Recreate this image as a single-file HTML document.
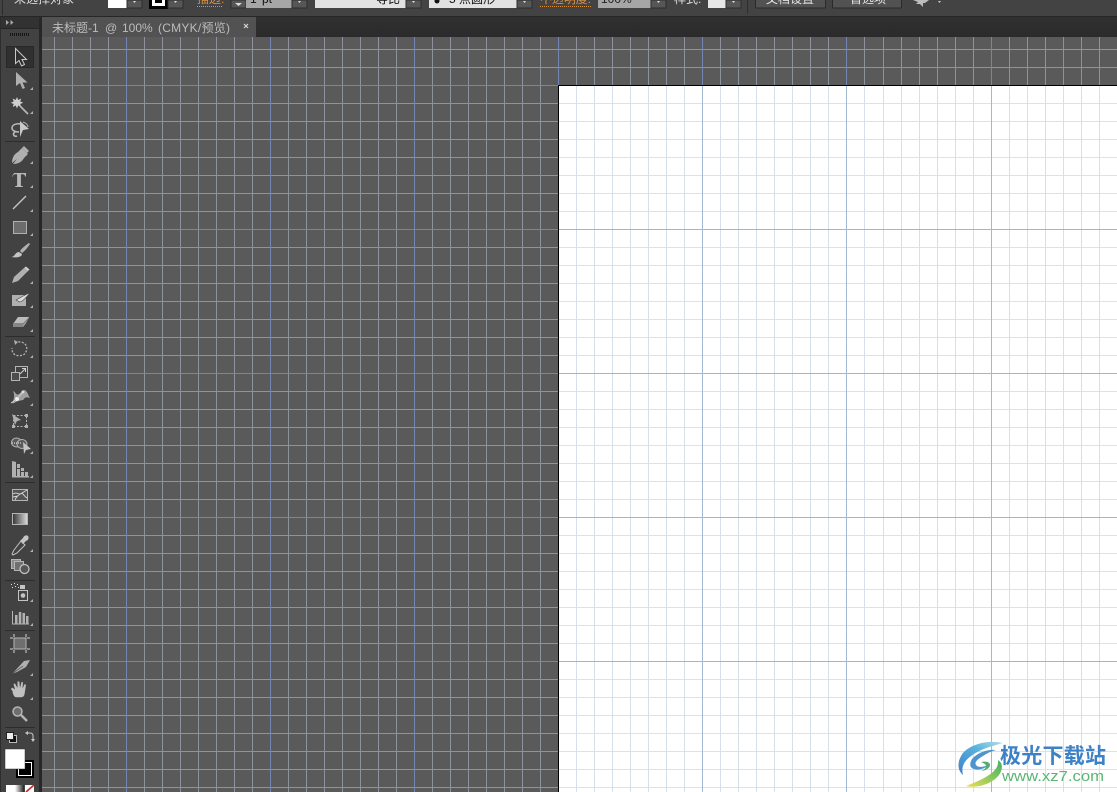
<!DOCTYPE html>
<html lang="zh-CN">
<head>
<meta charset="utf-8">
<title>未标题-1</title>
<style>
html,body{margin:0;padding:0;background:#5a5a5a;width:1117px;height:792px;overflow:hidden}
svg{display:block}
body>svg{position:absolute;left:0;top:0}
text{font-family:"Liberation Sans","Noto Sans CJK SC",sans-serif}
.soft{filter:blur(.35px)}
.g{fill:none;stroke-width:1;shape-rendering:crispEdges}
</style>
</head>
<body>
<svg width="1117" height="792" viewBox="0 0 1117 792" xmlns="http://www.w3.org/2000/svg">
<defs>
<path id="mv" d="M54.500 0V792M72.500 0V792M90.500 0V792M108.500 0V792M144.500 0V792M162.500 0V792M180.500 0V792M198.500 0V792M216.500 0V792M234.500 0V792M252.500 0V792M288.500 0V792M306.500 0V792M324.500 0V792M342.500 0V792M360.500 0V792M378.500 0V792M396.500 0V792M432.500 0V792M450.500 0V792M468.500 0V792M486.500 0V792M504.500 0V792M522.500 0V792M540.500 0V792M576.500 0V792M594.500 0V792M612.500 0V792M630.500 0V792M648.500 0V792M666.500 0V792M684.500 0V792M720.500 0V792M738.500 0V792M756.500 0V792M774.500 0V792M792.500 0V792M810.500 0V792M828.500 0V792M864.500 0V792M883.500 0V792M901.500 0V792M919.500 0V792M937.500 0V792M955.500 0V792M973.500 0V792M1009.500 0V792M1027.500 0V792M1045.500 0V792M1063.500 0V792M1081.500 0V792M1099.500 0V792"/>
<path id="mh" d="M0 49.500H1117M0 67.500H1117M0 103.500H1117M0 121.500H1117M0 139.500H1117M0 157.500H1117M0 175.500H1117M0 193.500H1117M0 211.500H1117M0 247.500H1117M0 265.500H1117M0 283.500H1117M0 301.500H1117M0 319.500H1117M0 337.500H1117M0 355.500H1117M0 391.500H1117M0 409.500H1117M0 427.500H1117M0 445.500H1117M0 463.500H1117M0 481.500H1117M0 499.500H1117M0 535.500H1117M0 553.500H1117M0 571.500H1117M0 589.500H1117M0 607.500H1117M0 625.500H1117M0 643.500H1117M0 679.500H1117M0 697.500H1117M0 715.500H1117M0 733.500H1117M0 751.500H1117M0 769.500H1117M0 787.500H1117"/>
<path id="Mv" d="M126.500 0V792M270.500 0V792M414.500 0V792M558.500 0V792M702.500 0V792M846.500 0V792M991.500 0V792"/>
<path id="Mh" d="M0 85.500H1117M0 229.500H1117M0 373.500H1117M0 517.500H1117M0 661.500H1117"/>
<linearGradient id="gr" x1="0" x2="1" y1="0" y2="0"><stop offset="0" stop-color="#333"/><stop offset="1" stop-color="#ddd"/></linearGradient>
<linearGradient id="gr2" x1="0" x2="1" y1="0" y2="0"><stop offset="0" stop-color="#fff"/><stop offset="1" stop-color="#222"/></linearGradient>
<linearGradient id="tb" x1="0" x2="0" y1="0" y2="1"><stop offset="0" stop-color="#303030"/><stop offset="1" stop-color="#2b2b2b"/></linearGradient>
<linearGradient id="sw1" x1="0" x2="1" y1="1" y2="0"><stop offset="0" stop-color="#3f7fc8"/><stop offset=".6" stop-color="#58b3dc"/><stop offset="1" stop-color="#b5dde8"/></linearGradient>
<linearGradient id="sw2" x1="0" x2="1" y1="1" y2="0"><stop offset="0" stop-color="#f0dc58"/><stop offset=".55" stop-color="#86c85c"/><stop offset="1" stop-color="#3fae6a"/></linearGradient>
</defs>

<!-- canvas -->
<rect x="41" y="37" width="1076" height="755" fill="#5a5a5a"/>
<svg x="41" y="37" width="1076" height="755" viewBox="41 37 1076 755">
<g class="soft">
<use href="#mh" class="g" stroke="#8f93a0"/>
<use href="#mv" class="g" stroke="#8d929c"/>
<use href="#Mh" class="g" stroke="#7385b0"/>
<use href="#Mv" class="g" stroke="#7385b0"/>
</g>
</svg>

<!-- artboard -->
<rect x="558" y="85" width="559" height="707" fill="#fff"/>
<svg x="558" y="85" width="559" height="707" viewBox="558 85 559 707">
<g class="soft">
<use href="#mh" class="g" stroke="#dbe2ea"/>
<use href="#mv" class="g" stroke="#d6e0ea"/>
<use href="#Mh" class="g" stroke="#a6b4c4"/>
<use href="#Mv" class="g" stroke="#a3b7d0"/>
</g>
</svg>
<rect x="558" y="85" width="559" height="1" fill="#000"/>
<rect x="558" y="85" width="1" height="707" fill="#000"/>

<!-- tab bar -->
<rect x="0" y="17" width="1117" height="20" fill="url(#tb)"/>
<rect x="42" y="17" width="214" height="20" fill="#525252"/>
<rect x="41" y="17" width="1" height="20" fill="#2a2a2a"/>
<g font-size="12" fill="#bcbcbc" class="soft">
<text x="52" y="32">未标题-1</text>
<text x="105" y="32">@</text>
<text x="122" y="32">100%</text>
<text x="158" y="32" textLength="72" lengthAdjust="spacing">(CMYK/预览)</text>
</g>
<path d="M244 24l4 4M248 24l-4 4" stroke="#d4d4d4" stroke-width="1.200" fill="none"/>

<!-- top control bar -->
<rect x="0" y="0" width="1117" height="16" fill="#434343"/>
<rect x="0" y="16" width="1117" height="1" fill="#262626"/>
<rect x="2" y="0" width="1" height="15" fill="#2c2c2c"/>
<text x="14" y="3" font-size="12" fill="#dcdcdc">未选择对象</text>
<rect x="108" y="0" width="19" height="8" fill="#fff"/>
<rect x="127" y="0" width="15" height="8" fill="#565656" stroke="#2e2e2e"/>
<path d="M133 1h3l-1.500 2z" fill="#ddd"/>
<rect x="149" y="0" width="19" height="9" fill="#000"/>
<rect x="152" y="0" width="13" height="6" fill="#fff"/>
<rect x="155" y="0" width="7" height="3" fill="#000"/>
<rect x="168" y="0" width="15" height="8" fill="#565656" stroke="#2e2e2e"/>
<path d="M174 1h3l-1.500 2z" fill="#ddd"/>
<text x="197" y="3" font-size="12" fill="#d98f3f">描边:</text>
<path d="M197 6.500h26" stroke="#d98f3f" stroke-dasharray="1 1"/>
<rect x="231" y="0" width="15" height="8" fill="#565656" stroke="#2e2e2e"/>
<path d="M235 3h7l-3.500 3z" fill="#ddd"/>
<rect x="246" y="0" width="46" height="8" fill="#a6a6a6"/>
<text x="250" y="3" font-size="12" fill="#111">1</text><text x="262" y="3" font-size="12" fill="#111">pt</text>
<rect x="292" y="0" width="15" height="8" fill="#565656" stroke="#2e2e2e"/>
<path d="M298 1h3l-1.500 2z" fill="#ddd"/>
<rect x="315" y="0" width="91" height="8" fill="#e2e2e2"/>
<text x="376" y="3" font-size="12" fill="#111">等比</text>
<rect x="406" y="0" width="15" height="8" fill="#565656" stroke="#2e2e2e"/>
<path d="M412 1h3l-1.500 2z" fill="#ddd"/>
<rect x="429" y="0" width="88" height="8" fill="#e2e2e2"/>
<circle cx="437" cy="1" r="2.500" fill="#111"/>
<text x="449" y="3" font-size="12" fill="#111">5 点圆形</text>
<rect x="517" y="0" width="15" height="8" fill="#565656" stroke="#2e2e2e"/>
<path d="M523 1h3l-1.500 2z" fill="#ddd"/>
<text x="540" y="3" font-size="12" fill="#d98f3f" textLength="51">不透明度:</text>
<path d="M540 6.500h51" stroke="#d98f3f" stroke-dasharray="1 1"/>
<rect x="598" y="0" width="53" height="8" fill="#a6a6a6"/>
<text x="601" y="3" font-size="12" fill="#222">100%</text>
<rect x="651" y="0" width="15" height="8" fill="#565656" stroke="#2e2e2e"/>
<path d="M657 1h3l-1.500 2z" fill="#ddd"/>
<text x="674" y="3" font-size="12" fill="#dcdcdc">样式:</text>
<rect x="708" y="0" width="18" height="8" fill="#e6e6e6"/>
<rect x="726" y="0" width="15" height="8" fill="#565656" stroke="#2e2e2e"/>
<path d="M732 1h3l-1.500 2z" fill="#ddd"/>
<rect x="747" y="0" width="1" height="14" fill="#2e2e2e"/>
<rect x="755.500" y="-3" width="70" height="11" rx="1" fill="#525252" stroke="#2a2a2a"/>
<text x="766" y="3" font-size="12" fill="#e0e0e0">文档设置</text>
<rect x="832.500" y="-3" width="69" height="11" rx="1" fill="#525252" stroke="#2a2a2a"/>
<text x="850" y="3" font-size="12" fill="#e0e0e0">首选项</text>
<path d="M913 0h16l-4 3h-2l0 4-3-3-4 0 2-2z" fill="#bdbdbd"/>
<path d="M938 1h3l-1.500 2z" fill="#ccc"/>

<!-- left toolbar -->
<rect x="0" y="17" width="41" height="775" fill="#424242"/>
<rect x="0" y="17" width="1" height="775" fill="#2d2d2d"/>
<rect x="39" y="17" width="3" height="775" fill="#272727"/>
<rect x="1" y="17" width="38" height="11" fill="#323232"/>
<rect x="1" y="28" width="38" height="1" fill="#262626"/>
<path d="M6 20l3 2.500-3 2.500zM10.500 20l3 2.500-3 2.500z" fill="#aaa"/>
<path d="M10 34.500h19" stroke="#151515" stroke-width="3" stroke-dasharray="1 1"/>
<rect x="6.500" y="46.500" width="27" height="21" fill="#303030" stroke="#282828"/>

<g fill="#b0b0b0" stroke="none" class="soft">
<!-- selection -->
<path d="M15.500 48.500v15l3.500-3 2.500 5.500 3-1.500-2.500-5h4.500z" fill="none" stroke="#c8c8c8"/>
<!-- direct -->
<path d="M16 72v14l4-3 2.500 6 2.500-1-2.500-5.500h5z"/>
<!-- wand -->
<path d="M17 97l1.200 3 3-1.500-1 3 3 1.200-3 1.300 1 3-3-1.500-1.200 3-1.300-3-3 1.500 1-3-3-1.300 3-1.200-1-3 3 1.500z" fill="#d0d0d0"/>
<path d="M20 106l8 8" stroke="#b4b4b4" stroke-width="1.800"/>
<!-- lasso -->
<path d="M21 124c-5-1-9 1-9 4 0 2.500 3 4 7 4M15 132c-3 2-1 5 2 4" fill="none" stroke="#bcbcbc" stroke-width="1.500"/>
<path d="M20 121l9 8-6 1-3 7z" fill="#c8c8c8"/>
<path d="M23 122c3 1 5 3 5 5" fill="none" stroke="#b4b4b4"/>
<rect x="5" y="141" width="30" height="1" fill="#2c2c2c"/>
<!-- pen -->
<path d="M12 163c0-5 2-9 6-11l4-4 6 6-4 4c-2 4-6 6-11 6l4-5z"/>
<path d="M22 148l2-2 5 5-2 2z"/>
<!-- type -->
<path d="M14 173h12v3.500h-.8c-.3-1.500-1-2.300-2.500-2.300h-1.800v10.800c0 .8.500 1 2 1.200v.8h-7.800v-.8c1.500-.2 2-.4 2-1.200v-10.800h-1.800c-1.500 0-2.200.8-2.500 2.300h-.8z" fill="#b8b8b8"/>
<!-- line -->
<path d="M13 209l13-13" stroke="#c8c8c8" stroke-width="1.300"/>
<!-- rect -->
<rect x="13.500" y="221.500" width="13" height="12" fill="#6d6d6d" stroke="#b0b0b0"/>
<!-- brush -->
<path d="M29 243c-3 2-7 5-9 8l2 2c3-2 6-6 8-9z"/>
<path d="M11 257c4 0 4-5 8-5l3 2c0 3-5 4-11 3z" fill="#c4c4c4"/>
<!-- pencil -->
<path d="M24 268l4 3-10 10-6 2 2-6z"/>
<path d="M24 268l2-1.500 3.500 3-1.500 1.500z" fill="#d0d0d0"/>
<!-- blob -->
<path d="M12 295h12l-1 4 3-1v8H12z"/>
<path d="M16 300c4-2 8-5 14-7-3 3-6 8-10 9z" fill="#dcdcdc" stroke="#424242" stroke-width=".6"/>
<!-- eraser -->
<path d="M18 317h11l-3 6-3 4H13v-3z" fill="#bcbcbc"/>
<path d="M13 323h10l6-6v1l-5.500 7-.5 2H13z" fill="#868686"/>
<rect x="5" y="336" width="30" height="1" fill="#2c2c2c"/>
<!-- rotate -->
<path d="M15 343c4-2 8-1 10 1 3 3 2 9-2 11-3 1-7 1-9-1-2-2-2-4-2-6" fill="none" stroke="#b4b4b4" stroke-width="1.300" stroke-dasharray="2 1.500"/>
<path d="M14 340l4 2-3 3z"/>
<!-- scale -->
<rect x="15.500" y="366.500" width="12" height="11" fill="none" stroke="#b4b4b4"/>
<rect x="11.500" y="372.500" width="8" height="8" fill="#4c4c4c" stroke="#b4b4b4"/>
<path d="M20 374l5-5M22 368.500h3.500v3.500" fill="none" stroke="#d0d0d0"/>
<!-- warp -->
<path d="M13 391c3 1 3 5 6 3s2-4 5-4 4 5 6 8c-3-1-5-1-6 1s-5 1-8 3-4 1-4 1c2-3 3-8 1-12z" fill="#a0a0a0"/>
<circle cx="17" cy="399" r="1.900" fill="#fff"/>
<circle cx="23" cy="392" r="1.300" fill="#ddd"/>
<path d="M11 403l6-4 6-7" stroke="#ddd" stroke-width=".8" fill="none"/>
<!-- free transform -->
<rect x="13.500" y="415.500" width="13" height="11" fill="none" stroke="#b4b4b4" stroke-dasharray="2 1.500"/>
<path d="M12 414l9 6-4 1-2 4z"/>
<rect x="25" y="414" width="3" height="3"/><rect x="25" y="425" width="3" height="3"/><rect x="12" y="425" width="3" height="3"/>
<!-- shape builder -->
<ellipse cx="16.500" cy="442.500" rx="5" ry="4.500" fill="#5a5a5a" stroke="#b4b4b4"/>
<ellipse cx="22" cy="444" rx="5" ry="4.500" fill="#5a5a5a" stroke="#b4b4b4"/>
<path d="M12 443h9" stroke="#eee" stroke-dasharray="1 1"/>
<path d="M23 442l8 7-5 1-2 4z" fill="#c4c4c4"/>
<!-- graph -->
<path d="M12 461l4 1v14h-4zM17 464h3v4h-3zM17 469h3v7h-3zM21 468h3v3h-3zM21 472h3v4h-3zM25 472h3v4h-3z"/>
<rect x="12" y="476" width="17" height="1.500"/>
<rect x="5" y="482" width="30" height="1" fill="#2c2c2c"/>
<!-- mesh -->
<rect x="12.500" y="489.500" width="15" height="11" fill="#555" stroke="#b4b4b4"/>
<path d="M13 494c4-3 6 2 9-1l5-3M15 500c1-3 3-5 7-7 2 2 3 4 5 5M13 497l5-1" fill="none" stroke="#d8d8d8" stroke-width=".9"/>
<!-- gradient -->
<rect x="12.500" y="513.500" width="15" height="11" fill="url(#gr)" stroke="#b4b4b4"/>
<!-- eyedropper -->
<path d="M21 541l4 4-8 8-4 2-1-1 2-4z" fill="none" stroke="#c4c4c4"/>
<path d="M20 541l3-3c1-3 4-3 5-2s1 4-2 5l-3 3z" fill="#c4c4c4"/>
<!-- blend -->
<rect x="11.500" y="559.500" width="9" height="9" fill="#8a8a8a" stroke="#b4b4b4"/>
<rect x="14.500" y="561.500" width="9" height="9" fill="#707070" stroke="#b4b4b4"/>
<circle cx="24.500" cy="569" r="4.500" fill="#555" stroke="#c0c0c0" stroke-width="1.300"/>
<rect x="5" y="580" width="30" height="1" fill="#2c2c2c"/>
<!-- symbol sprayer -->
<path d="M11 584h1v1h-1zM14 583h1v1h-1zM17 584h1v1h-1zM12 587h1v1h-1zM15 586h1v1h-1zM18 587h1v1h-1z" fill="#ddd"/>
<rect x="20" y="585" width="5" height="4" fill="#c4c4c4"/>
<rect x="18.500" y="590.500" width="9" height="10" fill="none" stroke="#c4c4c4"/>
<circle cx="23" cy="595.500" r="2.300" fill="#c4c4c4"/>
<!-- column graph -->
<path d="M12.500 611v13h16.500" fill="none" stroke="#b4b4b4"/>
<rect x="15" y="615" width="2.500" height="9"/><rect x="18.800" y="612" width="2.500" height="12"/><rect x="22.500" y="613" width="2.500" height="11"/><rect x="26" y="616" width="2.500" height="8"/>
<rect x="5" y="630" width="30" height="1" fill="#2c2c2c"/>
<!-- artboard tool -->
<rect x="14" y="638" width="12" height="11" fill="#6f6f6f" stroke="#b4b4b4"/>
<path d="M10 638h3M27 638h3M10 649h3M27 649h3M14 634v3M26 634v3M14 650v3M26 650v3" stroke="#d4d4d4" fill="none"/>
<!-- slice -->
<path d="M12 674l12-13 6-1-4 7-9 5z"/>
<path d="M12 674l11-8" stroke="#424242" stroke-width=".6"/>
<!-- hand -->
<path d="M13 692l-2-3 1-1.500 3 2-1.500-5.500 1.500-.5 2.500 4.500v-6.500h1.800l.7 6.500 1.500-6 1.500.3-.5 6.500 2-4.500 1.500.5-1.500 9.500c-.5 2.500-2 3-4 3h-4c-2 0-3-2-4-4.800z" fill="#c0c0c0"/>
<!-- zoom -->
<circle cx="17.500" cy="711.500" r="4.500" fill="#6e6e6e" stroke="#b4b4b4" stroke-width="1.500"/>
<path d="M21 715l6 6" stroke="#b4b4b4" stroke-width="2.500"/>
<rect x="5" y="727" width="30" height="1" fill="#2c2c2c"/>
</g>

<!-- small flyout triangles -->
<g fill="#b0b0b0">
<path d="M33 87v3h-3z"/><path d="M33 111v3h-3z"/><path d="M33 161v3h-3z"/><path d="M33 185v3h-3z"/><path d="M33 209v3h-3z"/><path d="M33 233v3h-3z"/><path d="M33 281v3h-3z"/><path d="M33 305v3h-3z"/><path d="M33 329v3h-3z"/><path d="M33 355v3h-3z"/><path d="M33 379v3h-3z"/><path d="M33 403v3h-3z"/><path d="M33 451v3h-3z"/><path d="M33 475v3h-3z"/><path d="M33 549v3h-3z"/><path d="M33 599v3h-3z"/><path d="M33 623v3h-3z"/><path d="M33 673v3h-3z"/><path d="M33 697v3h-3z"/>
</g>

<!-- color controls -->
<rect x="9.500" y="735.500" width="7" height="7" fill="#111" stroke="#bbb"/>
<rect x="6.500" y="732.500" width="7" height="7" fill="#eee" stroke="#222"/>
<path d="M26 733h4c2 0 3 1 3 3v3" fill="none" stroke="#c8c8c8"/>
<path d="M28 731l-3 2 3 2zM31 739h4l-2 3z" fill="#c8c8c8"/>
<rect x="16" y="760" width="18" height="18" fill="#000"/>
<rect x="18.500" y="762.500" width="13" height="13" fill="none" stroke="#fff"/>
<rect x="21" y="765" width="8" height="8" fill="#000"/>
<rect x="5" y="749" width="20" height="20" fill="#fff" stroke="#333" stroke-width=".5"/>
<rect x="6" y="785" width="9" height="7" fill="#fff"/>
<rect x="15" y="785" width="9" height="7" fill="url(#gr2)"/>
<rect x="25" y="785" width="9" height="7" fill="#fff"/>
<path d="M26 792l8-7" stroke="#d02828" stroke-width="1.600"/>

<!-- watermark logo -->
<g class="soft">
<path d="M1003 743c-13-3-31 0-40 10-6 8-6 17 0 22-2-8 1-14 8-19 9-7 21-10 32-13z" fill="url(#sw1)"/>
<path d="M996 750c-9-1-19 3-24 9-3 5-2 9 2 10 5 2 12-1 14-4-4 2-10 3-12 0-2-3 2-6 7-9 4-3 9-5 13-6z" fill="#4d94d0"/>
<path d="M966 786c12 3 27-3 33-11 4-6 4-12-1-15 1 6-3 11-9 15-7 5-16 8-23 11z" fill="url(#sw2)"/>
<path d="M981 762c5-1 9 0 9 3s-5 6-9 6c3-1 5-3 5-5 0-2-3-3-5-4z" fill="#4fae70"/>
</g>
<text x="1000" y="763" font-size="21" font-weight="700" fill="#3d82c6" textLength="106" lengthAdjust="spacing" style="font-family:'Noto Sans CJK SC','Liberation Sans',sans-serif">极光下载站</text>
<text x="1002" y="781" font-size="15" fill="#58b672" textLength="102" lengthAdjust="spacingAndGlyphs">www.xz7.com</text>
</svg>
</body>
</html>
